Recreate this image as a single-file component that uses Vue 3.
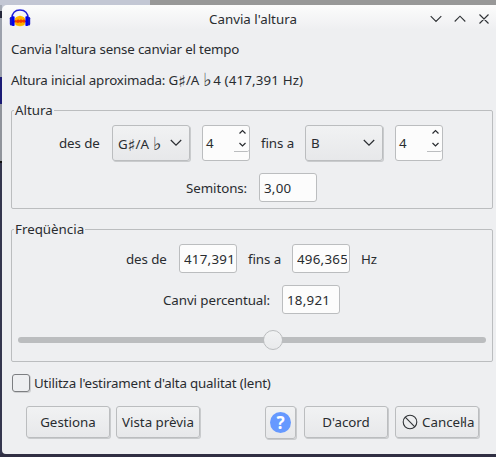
<script setup>
import { ref } from 'vue'

const semitones = ref('3,00')
const fromHz = ref('417,391')
const toHz = ref('496,365')
const percent = ref('18,921')
</script>

<template>
  <div class="desktop" lang="ca">
    <div class="edge"></div>
    <main class="dialog">
      <header class="titlebar">
        <svg class="logo" width="22" height="20" viewBox="0 0 22 20">
          <ellipse cx="11" cy="12" rx="5.6" ry="5.200" fill="#ffc800" />
          <path d="M6.500 9l1.500-1 1 .7 2-2 2 2 1-.7 1.500 1v7l-1.500.5-1-.7-2 1-2-1-1 .7-1.500-.5z" fill="#ffae00" />
          <path d="M5 12l1.500-1 1 .6 1.500-1.400 1.500 1 1.500-1 1.500 1 1.500-1 2 1.800v1l-2 .8-1.500-.7-1.500 1-1.500-.8-1.500.8-2-.8-2 .3z" fill="#f33a00" />
          <path d="M2.900 9.500C2.800 4 6 1 11 1S19.200 4 19.100 9.500" fill="none" stroke="#2020d8" stroke-width="1.500" />
          <rect x=".8" y="7.800" width="3.400" height="8.700" rx="1.500" fill="#1515c8" />
          <rect x="3" y="7.300" width="2.600" height="9.700" rx=".8" fill="#0000ee" />
          <rect x="17.800" y="7.800" width="3.400" height="8.700" rx="1.500" fill="#1515c8" />
          <rect x="16.400" y="7.300" width="2.600" height="9.700" rx=".8" fill="#0000ee" />
        </svg>
        <h1>Canvia l'altura</h1>
        <svg class="controls" width="60" height="12" viewBox="0 0 60 12">
          <path d="M.7 3.200L6 8.500l5.300-5.300M24.700 8.500L30 3.200l5.300 5.300M49.500 1.500l9 9M58.500 1.500l-9 9" />
        </svg>
      </header>

      <p class="intro">Canvia l'altura sense canviar el tempo</p>
      <p class="estimate">Altura inicial aproximada: G<span class="sharp">♯</span>/A<span class="flat">♭</span><span class="value">4 (417,391 Hz)</span></p>

      <section class="group pitch">
        <h2>Altura</h2>
        <div class="row pitch-row">
          <span class="label from">des de</span>
          <div class="select">
            <span class="note">G<span class="sharp">♯</span>/A<span class="flat">♭</span></span>
            <svg width="12" height="8" viewBox="0 0 12 8"><path d="M.8 1L6 6.200 11.200 1" /></svg>
          </div>
          <div class="spin">
            <span>4</span>
            <svg width="15" height="36" viewBox="0 0 15 36">
              <path class="arrow" d="M5.500 7.500l3-3 3 3M5.500 17l3 3 3-3" />
              <path class="seam" d="M0 25.500h13.500q1 0 1-1" />
            </svg>
          </div>
          <span class="label to">fins a</span>
          <div class="select">
            <span>B</span>
            <svg width="12" height="8" viewBox="0 0 12 8"><path d="M.8 1L6 6.200 11.200 1" /></svg>
          </div>
          <div class="spin">
            <span>4</span>
            <svg width="15" height="36" viewBox="0 0 15 36">
              <path class="arrow" d="M5.500 7.500l3-3 3 3M5.500 17l3 3 3-3" />
              <path class="seam" d="M0 25.500h13.500q1 0 1-1" />
            </svg>
          </div>
        </div>
        <div class="row semi-row">
          <span class="label">Semitons:</span>
          <div class="field">{{ semitones }}</div>
        </div>
      </section>

      <section class="group freq">
        <h2>Freqüència</h2>
        <div class="row hz-row">
          <span class="label from">des de</span>
          <div class="field"><span class="clip">{{ fromHz }}</span></div>
          <span class="label to">fins a</span>
          <div class="field"><span class="clip">{{ toHz }}</span></div>
          <span class="label unit">Hz</span>
        </div>
        <div class="row pct-row">
          <span class="label">Canvi percentual:</span>
          <div class="field">{{ percent }}</div>
        </div>
        <div class="slider"><div class="knob"></div></div>
      </section>

      <div class="check"><i class="box"></i><span>Utilitza l'estirament d'alta qualitat (lent)</span></div>

      <footer class="buttons">
        <button>Gestiona</button>
        <button>Vista prèvia</button>
        <button class="help"><span>?</span></button>
        <button>D'acord</button>
        <button class="cancel">
          <svg width="16" height="16" viewBox="0 0 16 16"><circle cx="8" cy="8" r="6.800" /><path d="M3.200 3.200l9.600 9.600" /></svg>
          <span>Cance<span class="tight">l·</span>la</span>
        </button>
      </footer>
    </main>
  </div>
</template>

<style>
body { margin: 0; overflow: hidden; }
</style>

<style scoped>
* { box-sizing: border-box; }
.desktop {
  width: 496px;
  height: 457px;
  display: flex;
  padding-top: 5px;
  background: linear-gradient(90deg, #c3c7d4 0 150px, #989898 150px) 0 0 / 100% 11px no-repeat, #302f43;
  font: 13.333px/18px "Noto Sans", "DejaVu Sans", sans-serif;
  color: #292c30;
}
.edge {
  width: 2px;
  flex: none;
  height: 449px;
  background: linear-gradient(#a4a9b4 0 6px, #25273b 6px 13px, #9ca1ac 13px 72px, #1b1b75 72px 99px, #8f939b 99px 156px, #111 156px 158px, #34364e 158px);
}
.dialog {
  width: 494px;
  height: 449px;
  padding: 0 3px 0 9px;
  border-radius: 5px 0 0 4px;
  background: linear-gradient(#fcfcfc, #eeeff1 25px);
}
.titlebar { height: 30px; display: flex; align-items: flex-start; padding-top: 4px; }
.logo { margin-left: -2px; flex: none; }
h1 {
  width: 330px;
  margin: 1px 0 0 27px;
  padding-left: 151px;
  font-size: 13.333px;
  line-height: 18px;
  font-weight: 400;
}
.controls { margin: 4px 0 0 42px; flex: none; fill: none; stroke: #303336; stroke-width: 1.100; }
p { margin: 0; white-space: pre; letter-spacing: -0.18px; }
.intro { margin-top: 5px; }
.estimate { margin-top: 13px; height: 18px; }
.value { letter-spacing: 0.15px; }
.sharp { font-family: "DejaVu Sans", sans-serif; font-size: 16.500px; line-height: 14px; letter-spacing: 0; vertical-align: -1.500px; }
.flat {
  display: inline-block;
  width: 14px;
  padding-left: 4px;
  font-family: "DejaVu Sans", sans-serif;
  font-size: 18px;
  line-height: 14px;
  vertical-align: -1px;
}
.group { width: 482px; border: 1px solid #bbbdbf; border-radius: 2px; }
.pitch { height: 99px; margin-top: 21px; }
.freq { height: 133px; margin-top: 20px; }
h2 { width: max-content; margin: -10px 0 0 2px; padding: 0 1px; background: #eeeff1; font-size: 13.333px; line-height: 18px; font-weight: 400; }
.row { display: flex; align-items: center; }
.label { white-space: nowrap; flex: none; letter-spacing: -0.08px; }
.pitch-row { margin-top: 6px; padding-left: 47px; }
.pitch-row .from { width: 53px; }
.pitch-row .to { width: 44px; margin-left: 11px; }
.select {
  width: 78px;
  height: 36px;
  display: flex;
  align-items: center;
  justify-content: space-between;
  padding: 0 7px 0 5px;
  border: 1px solid #bbbdbf;
  border-radius: 3px;
  background: linear-gradient(#f1f2f3, #e7e8ea);
  box-shadow: 1px 1px 0 #c9cbcd;
  white-space: nowrap;
}
.select svg { fill: none; stroke: #292c30; stroke-width: 1.200; flex: none; margin-top: -1px; }
.note { height: 18px; margin: 2px -4px 0 0; letter-spacing: -0.1px; }
.spin {
  width: 48px;
  height: 36px;
  margin-left: 12px;
  padding-left: 3px;
  display: flex;
  align-items: center;
  justify-content: space-between;
  border: 1px solid #bbbdbf;
  border-radius: 3px;
  background: #fcfcfc;
}
.spin svg { align-self: flex-start; fill: none; }
.arrow { stroke: #292c30; stroke-width: 1.200; }
.seam { stroke: #bbbdbf; }
.field {
  width: 58px;
  height: 29px;
  padding: 0 2px 0 4px;
  line-height: 29px;
  border: 1px solid #bbbdbf;
  border-radius: 3px;
  background: #fcfcfc;
  letter-spacing: 0.25px;
  white-space: nowrap;
}
.clip { display: block; overflow: hidden; height: 27px; }
.semi-row { margin-top: 12px; padding-left: 174px; }
.semi-row .label { width: 73px; }
.hz-row { margin-top: 6px; padding-left: 114px; }
.hz-row .from { width: 53px; }
.hz-row .to { width: 44px; margin-left: 11px; }
.hz-row .unit { margin-left: 11px; }
.pct-row { margin-top: 12px; padding-left: 151px; }
.pct-row .label { width: 119px; }
.slider { width: 468px; height: 6px; margin: 23px 0 0 6px; border-radius: 3px; background: #bbbdbf; display: flex; align-items: center; padding-left: 245px; }
.knob { width: 20px; height: 20px; flex: none; border: 1px solid #bbbdbf; border-radius: 50%; background: linear-gradient(#f1f2f3, #e9eaec); }
.check { display: flex; align-items: center; height: 18px; margin: 12px 0 0 1px; gap: 4px; white-space: nowrap; letter-spacing: -0.18px; }
.box { width: 18px; height: 18px; flex: none; border: 1px solid #7c7e81; border-radius: 3px; box-shadow: 1px 1px 0 #cfd0d2; }
.buttons { display: flex; margin: 14px 0 0 15px; }
button {
  width: 84px;
  height: 32px;
  padding: 0;
  flex: none;
  border: 1px solid #bbbdbf;
  border-radius: 3px;
  background: linear-gradient(#f1f2f3, #e7e8ea);
  box-shadow: 1px 1px 0 #c9cbcd;
  color: inherit;
  font: inherit;
  white-space: nowrap;
}
button + button { margin-left: 6px; }
.buttons .help { width: 31px; height: 33px; margin-left: 65px; display: flex; align-items: center; justify-content: center; }
.help span { width: 21px; height: 21px; border-radius: 50%; background: #6699ff; color: #fff; font-weight: 700; font-size: 17px; line-height: 21px; }
.buttons .help + button { margin-left: 8px; }
.buttons .cancel { margin-left: 7px; display: flex; align-items: center; padding-left: 6px; gap: 4px; }
.tight { letter-spacing: -1.800px; }
.cancel svg { fill: none; stroke: #303336; stroke-width: 1.100; flex: none; }
</style>
